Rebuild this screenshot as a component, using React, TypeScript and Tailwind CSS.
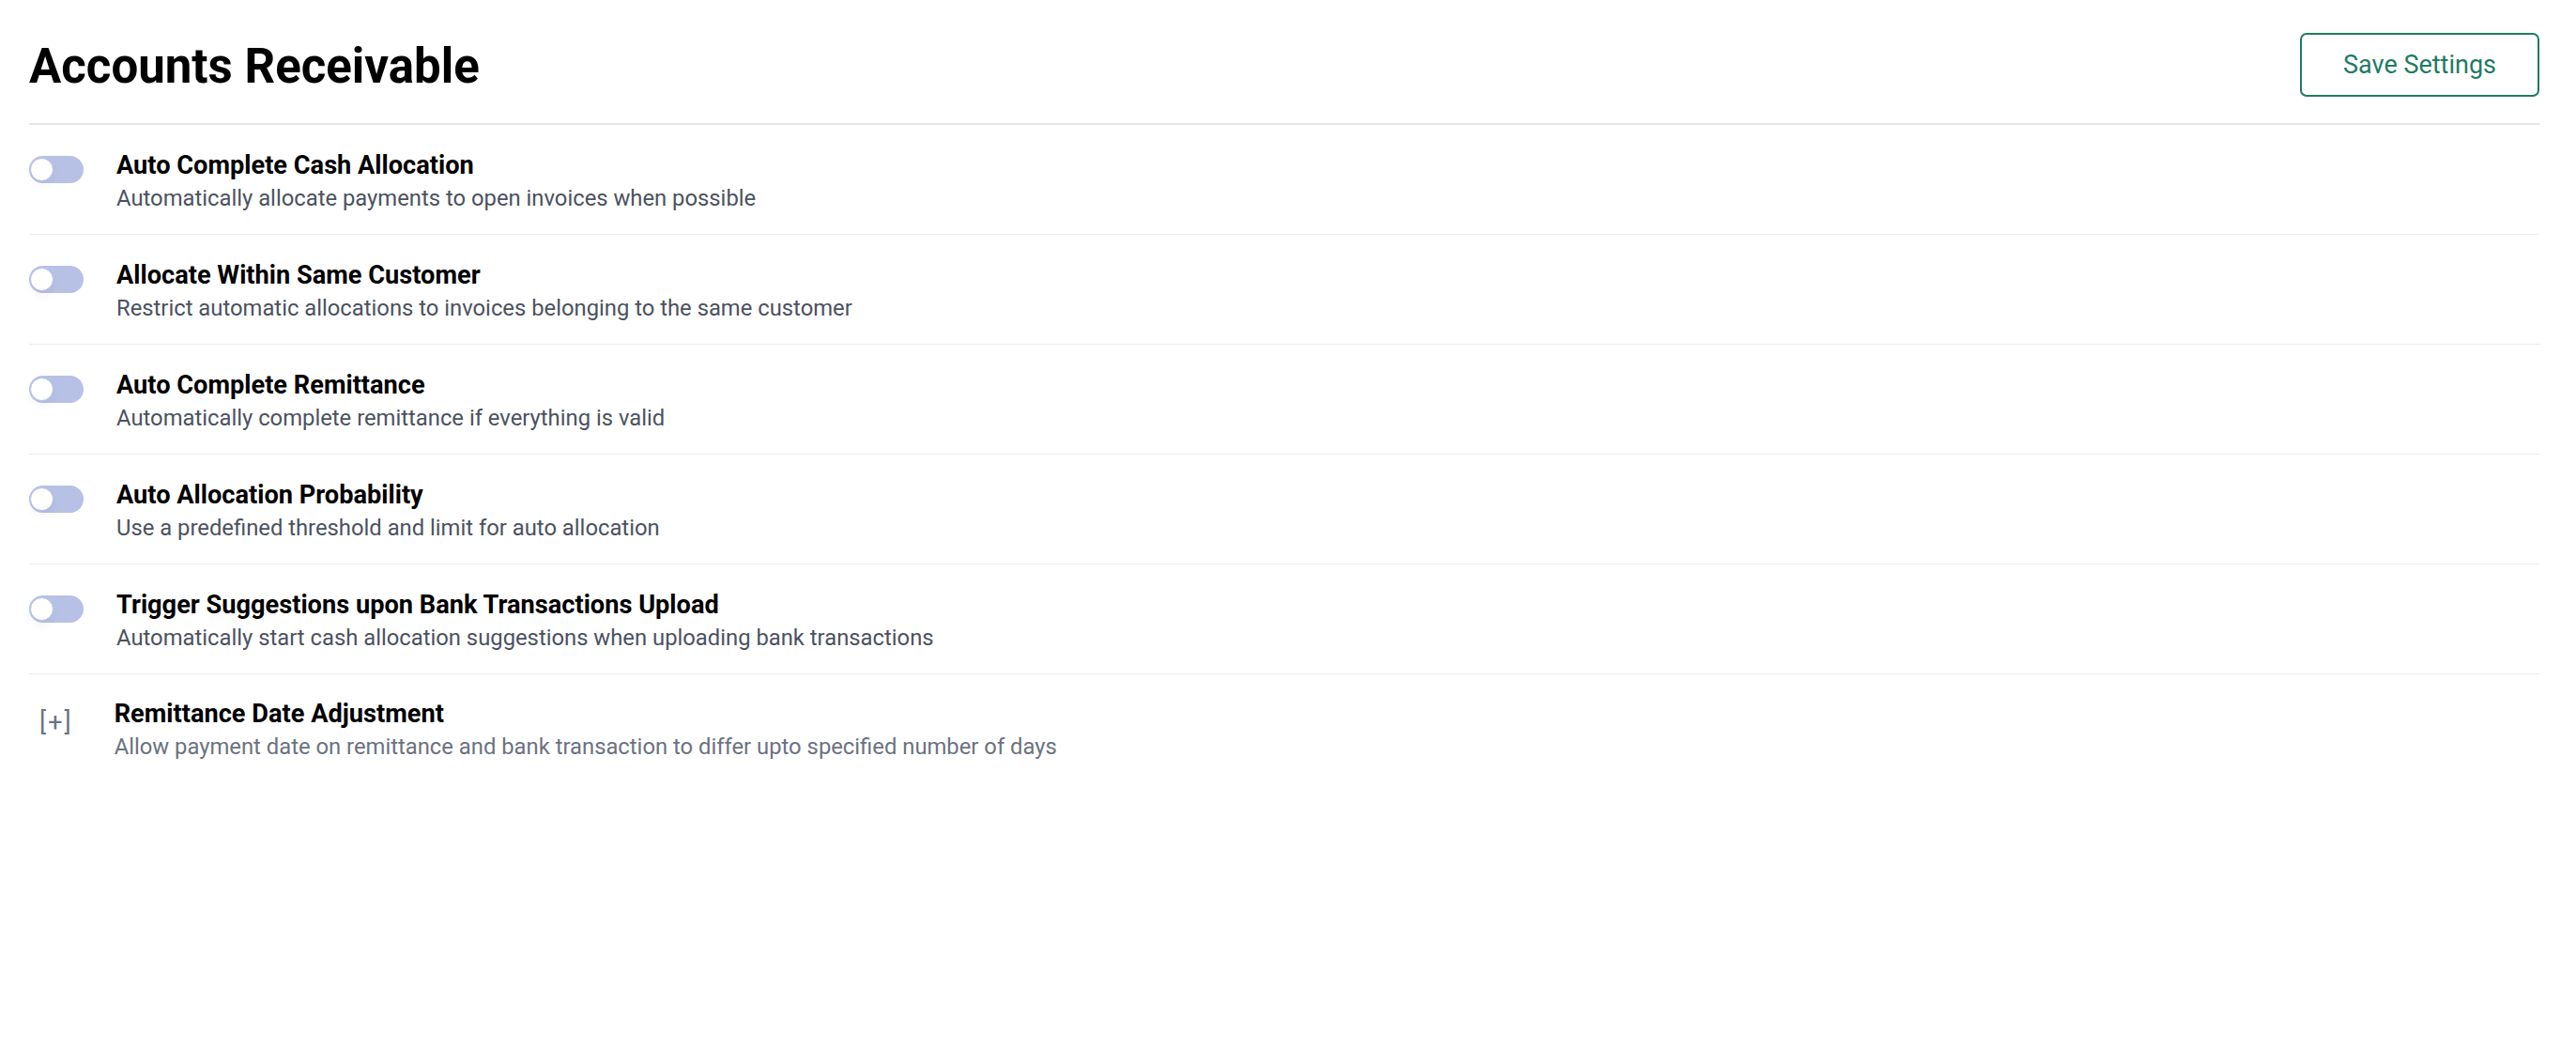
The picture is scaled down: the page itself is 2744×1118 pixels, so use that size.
const settings = [
  {
    title: "Auto Complete Cash Allocation",
    description: "Automatically allocate payments to open invoices when possible",
  },
  {
    title: "Allocate Within Same Customer",
    description: "Restrict automatic allocations to invoices belonging to the same customer",
  },
  {
    title: "Auto Complete Remittance",
    description: "Automatically complete remittance if everything is valid",
  },
  {
    title: "Auto Allocation Probability",
    description: "Use a predefined threshold and limit for auto allocation",
  },
  {
    title: "Trigger Suggestions upon Bank Transactions Upload",
    description: "Automatically start cash allocation suggestions when uploading bank transactions",
  },
];

function Toggle() {
  return (
    <div className="relative mt-[7px] h-[29px] w-[58px] shrink-0 rounded-full bg-[#b7c1e6]">
      <div className="absolute left-[1px] top-[2px] h-[25px] w-[25px] rounded-full border border-[#b7c1e6] bg-white shadow-[0_6px_10px_rgba(0,0,0,0.04)]" />
    </div>
  );
}

export default function App() {
  return (
    <div className="min-h-screen bg-white pl-[31px] pr-[39px] font-['Roboto',sans-serif]">
      <div className="flex items-center justify-between border-b-2 border-[#e4e4ea] pb-[28px] pt-[35px]">
        <h1 className="mt-[4px] text-[51px] font-bold leading-[64px] text-black">Accounts Receivable</h1>
        <button className="h-[68px] w-[255px] rounded-[7px] border-2 border-[#1f7b62] text-[27px] text-[#1f7b62]">
          Save Settings
        </button>
      </div>

      {settings.map((s) => (
        <div key={s.title} className="flex items-start gap-[35px] border-b border-[#ebebeb] pb-[20px] pt-[26px]">
          <Toggle />
          <div className="flex flex-col">
            <span className="text-[27.2px] font-bold leading-[34px] text-black">{s.title}</span>
            <span className="text-[23.8px] leading-[36px] text-[#4b5260]">{s.description}</span>
          </div>
        </div>
      ))}

      <div className="flex items-start gap-[44px] pt-[25px]">
        <span className="ml-[11px] mt-[9px] text-[27px] leading-[34px] tracking-[2px] text-[#6b7280]">[+]</span>
        <div className="flex flex-col">
          <span className="text-[27.2px] font-bold leading-[34px] text-black">Remittance Date Adjustment</span>
          <span className="text-[23.8px] leading-[36px] text-[#6b7280]">
            Allow payment date on remittance and bank transaction to differ upto specified number of days
          </span>
        </div>
      </div>
    </div>
  );
}
